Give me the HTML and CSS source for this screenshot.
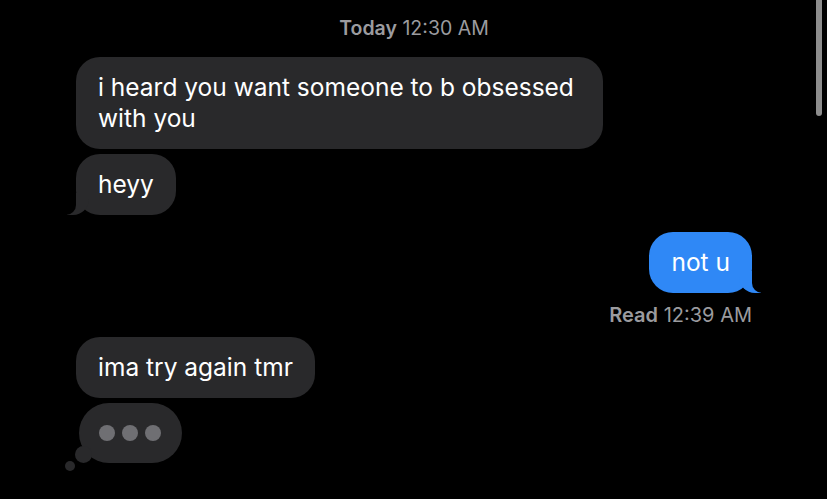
FILE: index.html
```html
<!DOCTYPE html>
<html lang="en">
<head>
    <meta charset="utf-8">
    <title>Messages</title>
    <link rel="stylesheet" href="styles.css">
</head>
<body>
    <div class="thread">
        <div class="stamp"><b>Today</b> 12:30 AM</div>

        <div class="row in">
            <div class="bubble">i heard you want someone to b obsessed with you</div>
        </div>
        <div class="row in tight">
            <div class="bubble tail">heyy</div>
        </div>

        <div class="row out">
            <div class="bubble tail">not u</div>
        </div>
        <div class="receipt"><b>Read</b> 12:39 AM</div>

        <div class="row in">
            <div class="bubble">ima try again tmr</div>
        </div>
        <div class="row in tight">
            <div class="typing">
                <span class="dot"></span>
                <span class="dot"></span>
                <span class="dot"></span>
            </div>
        </div>
    </div>

    <div class="scrollbar"></div>
</body>
</html>
```

FILE: styles.css
```css
html {
    height: 100%;
}

body {
    margin: 0;
    padding: 0;
    background: #000000;
    color: #ffffff;
    font-family: Inter, "Liberation Sans", sans-serif;
    height: 100%;
    overflow: hidden;
}

.thread {
    display: flex;
    flex-direction: column;
    padding: 17px 75px 0 76px;
}

.stamp {
    align-self: center;
    color: #9b9b9f;
    font-size: 19.5px;
    line-height: 22px;
    margin-bottom: 1px;
}

    .stamp b, .receipt b {
        font-weight: 600;
    }

.row {
    display: flex;
    margin-top: 17px;
}

    .row.tight {
        margin-top: 5px;
    }

    .row.in {
        justify-content: flex-start;
    }

    .row.out {
        justify-content: flex-end;
    }

.bubble {
    position: relative;
    max-width: 527px;
    padding: 15px 22px;
    font-size: 24.5px;
    line-height: 31px;
    border-radius: 24px;
    background: #29292b;
    box-sizing: border-box;
}

.out .bubble {
    background: #2f88f6;
}

/* the little hook at the bottom corner */
.bubble.tail::before,
.bubble.tail::after {
    content: "";
    position: absolute;
    bottom: 0;
    height: 22px;
}

.in .bubble.tail::before {
    left: -9px;
    width: 22px;
    background: #29292b;
    border-bottom-right-radius: 16px;
}

.in .bubble.tail::after {
    left: -10px;
    width: 10px;
    background: #000000;
    border-bottom-right-radius: 10px;
}

.out .bubble.tail::before {
    right: -9px;
    width: 22px;
    background: #2f88f6;
    border-bottom-left-radius: 16px;
}

.out .bubble.tail::after {
    right: -10px;
    width: 10px;
    background: #000000;
    border-bottom-left-radius: 10px;
}

.receipt {
    align-self: flex-end;
    color: #9b9b9f;
    font-size: 20px;
    line-height: 22px;
    margin-top: 11px;
    margin-bottom: -6px;
}

.typing {
    position: relative;
    display: flex;
    align-items: center;
    gap: 7px;
    margin-left: 3px;
    width: 103px;
    height: 60px;
    padding-left: 20px;
    box-sizing: border-box;
    border-radius: 30px;
    background: #29292b;
}

    .typing::before,
    .typing::after {
        content: "";
        position: absolute;
        border-radius: 50%;
        background: #29292b;
    }

    .typing::before {
        left: -4px;
        top: 43px;
        width: 17px;
        height: 17px;
    }

    .typing::after {
        left: -14px;
        top: 58px;
        width: 10px;
        height: 10px;
    }

.dot {
    width: 16px;
    height: 16px;
    border-radius: 50%;
    background: #6f6f73;
}

.scrollbar {
    position: absolute;
    top: 0;
    right: 5px;
    width: 6px;
    height: 116px;
    border-radius: 0 0 3px 3px;
    background: #8d8d8d;
}
```
